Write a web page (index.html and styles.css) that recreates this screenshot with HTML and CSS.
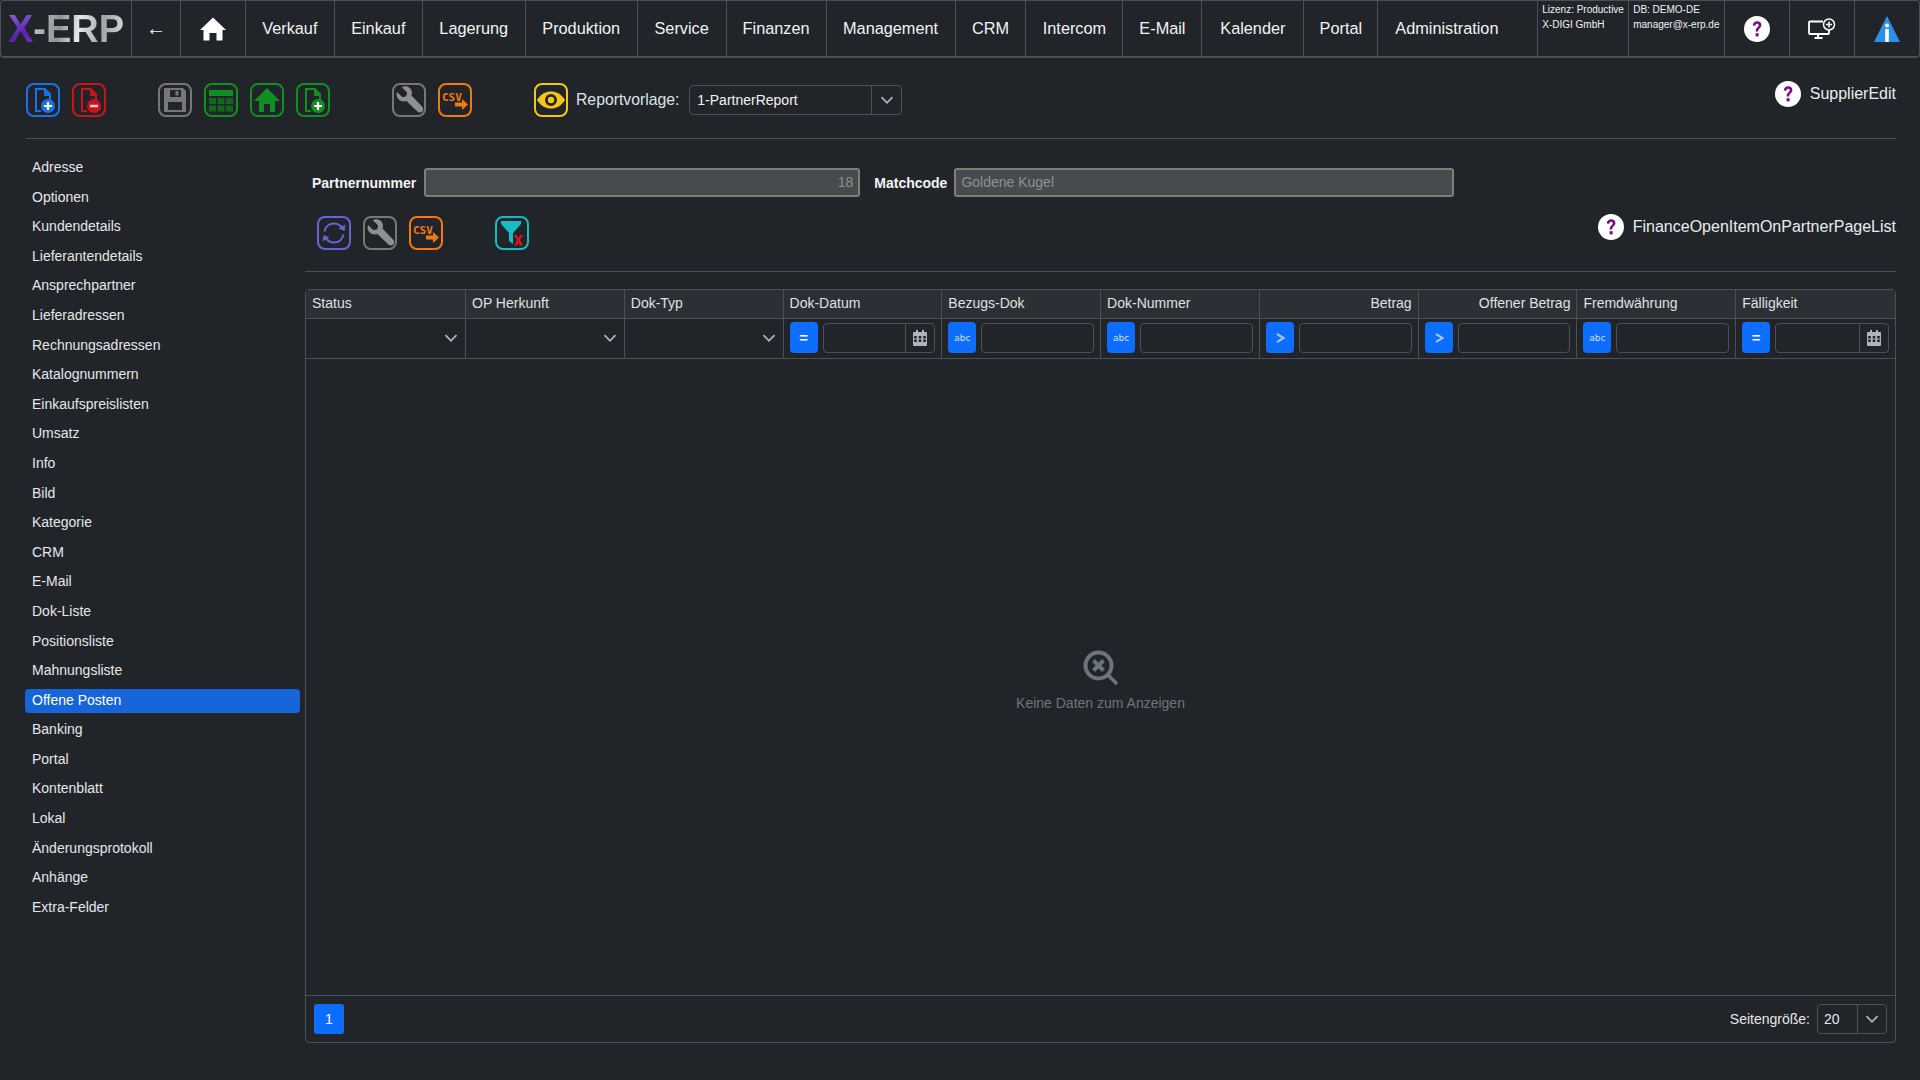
FILE: index.html
```html
<!DOCTYPE html>
<html lang="de">
<head>
    <meta charset="UTF-8">
    <title>X-ERP SupplierEdit</title>
    <link rel="stylesheet" href="styles.css">
</head>
<body>
    <svg class="icon-defs" width="0" height="0">
        <symbol id="i-help" viewBox="0 0 26 26">
            <circle cx="13" cy="13" r="13" fill="#fff"/>
            <path d="M8.800 9.600c0-2.700 1.900-4.300 4.400-4.300s4.200 1.500 4.200 3.800c0 3.100-3.200 3.300-3.200 6.300h-2.500c0-3.800 3-4 3-6.100 0-1-.6-1.600-1.600-1.600-1.100 0-1.700.8-1.800 2.100z" fill="#7a0a80"/>
            <rect x="11.600" y="17.200" width="3" height="3.200" fill="#7a0a80"/>
        </symbol>
        <symbol id="i-chevron" viewBox="0 0 16 16">
            <path d="M2.500 5.200 8 10.800l5.500-5.600" fill="none" stroke="#adb5bd" stroke-width="1.800"/>
        </symbol>
        <symbol id="i-calendar" viewBox="0 0 14 16">
            <path d="M3 0h2v2h4V0h2v2h2a1 1 0 0 1 1 1v12a1 1 0 0 1-1 1H1a1 1 0 0 1-1-1V3a1 1 0 0 1 1-1h2zM1.200 6v2.400h2.600V6zm4.500 0v2.400h2.600V6zm4.500 0v2.400h2.600V6zM1.200 9.600V12h2.600V9.600zm4.500 0V12h2.600V9.600zm4.500 0V12h2.600V9.600z" fill="#adb5bd"/>
        </symbol>
        <symbol id="i-gt" viewBox="0 0 14 14">
            <path d="M4 3 10.500 7 4 11" fill="none" stroke="#fff" stroke-width="1.800"/>
            <path d="M4 3 10.500 7 4 11" fill="none" stroke="#0d6efd" stroke-width="0.600"/>
        </symbol>
        <symbol id="i-wrench" viewBox="0 0 30 30">
            <path d="M3 7 8.500 12.200l3.700-.9.900-3.800L7.800 2.200C12-.2 18 2.500 18 8c0 1-.2 1.800-.5 2.600L28 21.500c1.800 1.800 1.400 3.800.3 5-1.200 1.200-3.300 1.600-5 0L12.500 16c-.9.300-1.800.5-2.700.5C4.500 16.400 1.400 12 3 7z" fill="#8f8f8f"/>
        </symbol>
        <symbol id="i-csv-arrow" viewBox="0 0 30 30">
            <path d="M15 17.500h7V14l6 5.500-6 5.500v-3.500h-7z" fill="#ee7a14"/>
        </symbol>
    </svg>

    <nav class="topnav">
        <a class="nav-logo"><span class="logo-x">X</span><span class="logo-rest">-ERP</span></a>
        <a class="nav-cell nav-back">←</a>
        <a class="nav-cell nav-home">
            <svg width="26" height="26" viewBox="0 0 26 26"><path d="M13 1.500 26 14h-3.500v10.500h-6V17h-7v7.500h-6V14H0z" fill="#fff"/></svg>
        </a>
        <a class="nav-cell w-verkauf">Verkauf</a>
        <a class="nav-cell w-einkauf">Einkauf</a>
        <a class="nav-cell w-lagerung">Lagerung</a>
        <a class="nav-cell w-produktion">Produktion</a>
        <a class="nav-cell w-service">Service</a>
        <a class="nav-cell w-finanzen">Finanzen</a>
        <a class="nav-cell w-management">Management</a>
        <a class="nav-cell w-crm">CRM</a>
        <a class="nav-cell w-intercom">Intercom</a>
        <a class="nav-cell w-email">E-Mail</a>
        <a class="nav-cell w-kalender">Kalender</a>
        <a class="nav-cell w-portal">Portal</a>
        <a class="nav-cell w-admin">Administration</a>
        <div class="nav-info w-lizenz">Lizenz: Productive<br>X-DIGI GmbH</div>
        <div class="nav-info w-db">DB: DEMO-DE<br>manager@x-erp.de</div>
        <a class="nav-cell nav-icon"><svg width="26" height="26"><use href="#i-help"/></svg></a>
        <a class="nav-cell nav-icon">
            <svg width="28" height="22" viewBox="0 0 28 22">
                <path d="M15 3.500H2a1 1 0 0 0-1 1V15a1 1 0 0 0 1 1h18a1 1 0 0 0 1-1v-3" fill="none" stroke="#fff" stroke-width="1.800"/>
                <path d="M10 16v3M6.500 20h8" stroke="#fff" stroke-width="2" fill="none"/>
                <circle cx="21" cy="6.500" r="5.500" fill="none" stroke="#fff" stroke-width="1.500"/>
                <path d="M21 3.500v6M18 6.500h6" stroke="#fff" stroke-width="1.500"/>
            </svg>
        </a>
        <a class="nav-cell nav-icon">
            <svg width="26" height="26" viewBox="0 0 26 26">
                <path d="M13 0 26 26H0z" fill="#2f8fe8"/>
                <circle cx="13" cy="9.500" r="2" fill="#fff"/>
                <rect x="11.200" y="13" width="3.600" height="13" fill="#fff"/>
            </svg>
        </a>
    </nav>

    <div class="toolbar">
        <div class="tool-group gap-after-1">
            <span class="tool-btn c-blue">
                <svg width="30" height="30" viewBox="0 0 30 30">
                    <path d="M7 3h10l6 6v6h-2v-4h-5V5H9v20h4v2H7z" fill="#1a72e8"/>
                    <path d="M18 4l4.500 4.500H18z" fill="#1a72e8"/>
                    <circle cx="20" cy="21" r="7" fill="#1a72e8"/>
                    <path d="M20 17v8M16 21h8" stroke="#fff" stroke-width="2.200"/>
                </svg>
            </span>
            <span class="tool-btn c-red">
                <svg width="30" height="30" viewBox="0 0 30 30">
                    <path d="M7 3h10l6 6v6h-2v-4h-5V5H9v20h4v2H7z" fill="#c9141c"/>
                    <path d="M18 4l4.500 4.500H18z" fill="#c9141c"/>
                    <circle cx="20" cy="21" r="7" fill="#c9141c"/>
                    <path d="M16 21h8" stroke="#f4d0d0" stroke-width="2.500"/>
                </svg>
            </span>
        </div>
        <div class="tool-group gap-after-2">
            <span class="tool-btn c-gray">
                <svg width="30" height="30" viewBox="0 0 30 30">
                    <path d="M4 3h19l3 3v21H4zM10 5v7h11V5zM8 17v8h14v-8z" fill="#777" fill-rule="evenodd"/>
                    <rect x="15.500" y="6" width="3" height="4.500" fill="#777"/>
                </svg>
            </span>
            <span class="tool-btn c-green">
                <svg width="30" height="30" viewBox="0 0 30 30">
                    <rect x="3" y="5" width="24" height="6" fill="#119022"/>
                    <g fill="#0d6a1a">
                        <rect x="3" y="13" width="7" height="6"/><rect x="11.500" y="13" width="7" height="6"/><rect x="20" y="13" width="7" height="6"/>
                        <rect x="3" y="20.500" width="7" height="6"/><rect x="11.500" y="20.500" width="7" height="6"/><rect x="20" y="20.500" width="7" height="6"/>
                    </g>
                </svg>
            </span>
            <span class="tool-btn c-green">
                <svg width="30" height="30" viewBox="0 0 30 30"><path d="M15 3 28 16h-5v11h-5v-8h-6v8H7V16H2z" fill="#119022"/></svg>
            </span>
            <span class="tool-btn c-green">
                <svg width="30" height="30" viewBox="0 0 30 30">
                    <path d="M7 3h10l6 6v6h-2v-4h-5V5H9v20h4v2H7z" fill="#119022"/>
                    <path d="M18 4l4.500 4.500H18z" fill="#119022"/>
                    <circle cx="20" cy="21" r="7" fill="#119022"/>
                    <path d="M20 17v8M16 21h8" stroke="#fff" stroke-width="2.200"/>
                </svg>
            </span>
        </div>
        <div class="tool-group gap-after-3">
            <span class="tool-btn c-gray"><svg width="30" height="30"><use href="#i-wrench"/></svg></span>
            <span class="tool-btn c-orange">
                <svg width="30" height="30" viewBox="0 0 30 30">
                    <text x="2" y="16" class="csv-label">CSV</text>
                    <use href="#i-csv-arrow"/>
                </svg>
            </span>
        </div>
        <span class="tool-btn c-yellow">
            <svg width="30" height="30" viewBox="0 0 30 30">
                <path d="M1 15C5 8.500 10 6.500 15 6.500S25 8.500 29 15c-4 6.500-9 8.500-14 8.500S5 21.500 1 15zm14-6a6 6 0 1 0 0 12 6 6 0 0 0 0-12z" fill="#f5c518" fill-rule="evenodd"/>
                <circle cx="15" cy="15" r="3.200" fill="#f5c518"/>
            </svg>
        </span>
        <label class="report-label">Reportvorlage:</label>
        <div class="report-select">
            <span class="report-value">1-PartnerReport</span>
            <span class="report-arrow"><svg width="16" height="16"><use href="#i-chevron"/></svg></span>
        </div>
        <div class="help-link">
            <svg width="26" height="26"><use href="#i-help"/></svg>
            <span>SupplierEdit</span>
        </div>
    </div>

    <div class="main">
        <ul class="sidemenu">
            <li>Adresse</li>
            <li>Optionen</li>
            <li>Kundendetails</li>
            <li>Lieferantendetails</li>
            <li>Ansprechpartner</li>
            <li>Lieferadressen</li>
            <li>Rechnungsadressen</li>
            <li>Katalognummern</li>
            <li>Einkaufspreislisten</li>
            <li>Umsatz</li>
            <li>Info</li>
            <li>Bild</li>
            <li>Kategorie</li>
            <li>CRM</li>
            <li>E-Mail</li>
            <li>Dok-Liste</li>
            <li>Positionsliste</li>
            <li>Mahnungsliste</li>
            <li class="active">Offene Posten</li>
            <li>Banking</li>
            <li>Portal</li>
            <li>Kontenblatt</li>
            <li>Lokal</li>
            <li>Änderungsprotokoll</li>
            <li>Anhänge</li>
            <li>Extra-Felder</li>
        </ul>

        <div class="content">
            <div class="form-row">
                <label class="form-label">Partnernummer</label>
                <div class="form-input input-number">18</div>
                <label class="form-label label-match">Matchcode</label>
                <div class="form-input input-match">Goldene Kugel</div>
            </div>

            <div class="grid-toolbar">
                <div class="tool-group gap-after-4">
                    <span class="tool-btn c-indigo">
                        <svg width="30" height="30" viewBox="0 0 30 30">
                            <path d="M5.500 13.500C6.500 8.500 10.500 5.500 15 5.500c3.500 0 6.500 1.800 8.200 4.500" fill="none" stroke="#6665d2" stroke-width="2"/>
                            <path d="M26.500 6.500 25.500 13l-6-2.500z" fill="#6665d2"/>
                            <path d="M24.500 16.500c-1 5-5 8-9.500 8-3.500 0-6.500-1.800-8.200-4.500" fill="none" stroke="#6665d2" stroke-width="2"/>
                            <path d="M3.500 23.500 4.500 17l6 2.500z" fill="#6665d2"/>
                        </svg>
                    </span>
                    <span class="tool-btn c-gray"><svg width="30" height="30"><use href="#i-wrench"/></svg></span>
                    <span class="tool-btn c-orange">
                        <svg width="30" height="30" viewBox="0 0 30 30">
                            <text x="2" y="16" class="csv-label">CSV</text>
                            <use href="#i-csv-arrow"/>
                        </svg>
                    </span>
                </div>
                <span class="tool-btn c-teal">
                    <svg width="30" height="30" viewBox="0 0 30 30">
                        <path d="M4 3h20v3l-8 9v11l-4-3v-8L4 6z" fill="#16bcc4"/>
                        <path d="M16.500 17h3.200l1.800 3.200 1.800-3.200H26l-3 5 3 5.500h-3.200l-1.300-2.800-1.300 2.800h-3.200l3-5.500z" fill="#d8161e"/>
                    </svg>
                </span>
                <div class="help-link">
                    <svg width="26" height="26"><use href="#i-help"/></svg>
                    <span>FinanceOpenItemOnPartnerPageList</span>
                </div>
            </div>

            <div class="grid-card">
                <div class="grid-row grid-head">
                    <div class="cell">Status</div>
                    <div class="cell">OP Herkunft</div>
                    <div class="cell">Dok-Typ</div>
                    <div class="cell">Dok-Datum</div>
                    <div class="cell">Bezugs-Dok</div>
                    <div class="cell">Dok-Nummer</div>
                    <div class="cell right">Betrag</div>
                    <div class="cell right">Offener Betrag</div>
                    <div class="cell">Fremdwährung</div>
                    <div class="cell">Fälligkeit</div>
                </div>
                <div class="grid-row grid-filter">
                    <div class="cell select-cell"><svg width="16" height="16"><use href="#i-chevron"/></svg></div>
                    <div class="cell select-cell"><svg width="16" height="16"><use href="#i-chevron"/></svg></div>
                    <div class="cell select-cell"><svg width="16" height="16"><use href="#i-chevron"/></svg></div>
                    <div class="cell">
                        <span class="op-btn op-eq">=</span>
                        <span class="filter-input"><i></i><b><svg width="14" height="16"><use href="#i-calendar"/></svg></b></span>
                    </div>
                    <div class="cell">
                        <span class="op-btn op-abc">abc</span>
                        <span class="filter-input"><i></i></span>
                    </div>
                    <div class="cell">
                        <span class="op-btn op-abc">abc</span>
                        <span class="filter-input"><i></i></span>
                    </div>
                    <div class="cell">
                        <span class="op-btn"><svg width="14" height="14"><use href="#i-gt"/></svg></span>
                        <span class="filter-input"><i></i></span>
                    </div>
                    <div class="cell">
                        <span class="op-btn"><svg width="14" height="14"><use href="#i-gt"/></svg></span>
                        <span class="filter-input"><i></i></span>
                    </div>
                    <div class="cell">
                        <span class="op-btn op-abc">abc</span>
                        <span class="filter-input"><i></i></span>
                    </div>
                    <div class="cell">
                        <span class="op-btn op-eq">=</span>
                        <span class="filter-input"><i></i><b><svg width="14" height="16"><use href="#i-calendar"/></svg></b></span>
                    </div>
                </div>

                <div class="grid-empty">
                    <svg width="36" height="36" viewBox="0 0 36 36">
                        <circle cx="15.500" cy="15.500" r="13" fill="none" stroke="#6c757d" stroke-width="4"/>
                        <path d="M10.500 10.500l10 10M20.500 10.500l-10 10" stroke="#6c757d" stroke-width="4"/>
                        <path d="M25 25l9 9" stroke="#6c757d" stroke-width="3.500"/>
                    </svg>
                    <span>Keine Daten zum Anzeigen</span>
                </div>

                <div class="grid-pager">
                    <span class="page-btn">1</span>
                    <div class="page-size">
                        <span>Seitengröße:</span>
                        <div class="page-select">
                            <span class="page-value">20</span>
                            <span class="page-arrow"><svg width="16" height="16"><use href="#i-chevron"/></svg></span>
                        </div>
                    </div>
                </div>
            </div>
        </div>
    </div>
</body>
</html>
```

FILE: styles.css
```css
* {
    margin: 0;
    padding: 0;
    box-sizing: border-box;
}

body {
    background: #212529;
    color: #dee2e6;
    font-family: "Liberation Sans", Arial, sans-serif;
    font-size: 14px;
    height: 1080px;
    overflow: hidden;
}

.icon-defs {
    position: absolute;
}

.csv-label {
    font-family: "DejaVu Sans Mono", monospace;
    font-size: 11px;
    font-weight: bold;
    fill: #ee7a14;
}

/* top navigation */
.topnav {
    display: flex;
    height: 58px;
    border: 1px solid #495057;
    border-bottom-width: 2px;
    border-radius: 4px;
    color: #f1f3f5;
    font-size: 16.3px;
}

.nav-logo {
    display: flex;
    align-items: center;
    width: 131px;
    padding: 2px 0 0 7px;
    border-right: 1px solid #495057;
    font-size: 38px;
    font-weight: bold;
}

.logo-x {
    background: linear-gradient(160deg, #9a6fe0, #5a22a8 60%, #7a45c8);
    -webkit-background-clip: text;
    background-clip: text;
    color: transparent;
}

.logo-rest {
    background: linear-gradient(100deg, #c8ccd0, #8d9398 30%, #e6e8ea 50%, #a0a5aa 75%, #dfe2e4);
    -webkit-background-clip: text;
    background-clip: text;
    color: transparent;
}

.nav-cell {
    display: flex;
    align-items: center;
    justify-content: center;
    border-right: 1px solid #495057;
}

.nav-back { width: 49px; font-size: 20px; }
.nav-home { width: 65px; }
.w-verkauf { width: 89px; }
.w-einkauf { width: 88px; }
.w-lagerung { width: 103px; }
.w-produktion { width: 112px; }
.w-service { width: 89px; }
.w-finanzen { width: 100px; }
.w-management { width: 129px; }
.w-crm { width: 71px; }
.w-intercom { width: 97px; }
.w-email { width: 79px; }
.w-kalender { width: 102px; }
.w-portal { width: 74px; }
.w-admin { width: 160px; justify-content: flex-start; padding-left: 17px; }
.w-lizenz { width: 91px; }
.w-db { width: 96px; }

.nav-info {
    padding: 1px 0 0 4px;
    border-right: 1px solid #495057;
    font-size: 10px;
    line-height: 15px;
    white-space: nowrap;
}

.nav-icon {
    width: 65px;
}

.nav-icon:last-child {
    width: 64px;
    border-right: none;
}

/* toolbars */
.toolbar {
    display: flex;
    align-items: center;
    margin: 25px 24px 0 26px;
    padding-bottom: 22px;
    height: 56px;
    border-bottom: 1px solid #495057;
}

.tool-group {
    display: flex;
    gap: 12px;
}

.gap-after-1 { margin-right: 52px; }
.gap-after-2 { margin-right: 62px; }
.gap-after-3 { margin-right: 62px; }
.gap-after-4 { margin-right: 52px; }

.tool-btn {
    display: flex;
    align-items: center;
    justify-content: center;
    width: 34px;
    height: 34px;
    border: 2px solid;
    border-radius: 8px;
}

.c-blue { border-color: #1a72e8; }
.c-red { border-color: #c9141c; }
.c-gray { border-color: #777; }
.c-green { border-color: #119022; }
.c-orange { border-color: #ee7a14; }
.c-yellow { border-color: #f5c518; }
.c-indigo { border-color: #6665d2; }
.c-teal { border-color: #16bcc4; }

.report-label {
    margin-left: 8px;
    color: #dee2e6;
    font-size: 15.75px;
}

.report-select {
    display: flex;
    width: 213px;
    height: 30px;
    margin-left: 10px;
    border: 1px solid #495057;
    border-radius: 4px;
    align-items: center;
}

.report-value {
    flex-grow: 1;
    padding-left: 7px;
    color: #f1f3f5;
}

.report-arrow {
    display: flex;
    align-items: center;
    justify-content: center;
    width: 30px;
    height: 100%;
    border-left: 1px solid #495057;
}

.help-link {
    display: flex;
    align-items: center;
    gap: 9px;
    margin-left: auto;
    color: #e9ecef;
    font-size: 16px;
}

.toolbar .help-link {
    margin-top: -11px;
}

/* main area */
.main {
    display: flex;
}

.sidemenu {
    list-style: none;
    width: 305px;
    padding: 17px 5px 0 25px;
}

.sidemenu li {
    height: 24px;
    margin-bottom: 5.6px;
    padding-left: 7px;
    border-radius: 4px;
    line-height: 23px;
    color: #e4e7ea;
}

.sidemenu .active {
    background: #1565d8;
    color: #fff;
}

.content {
    width: 1591px;
}

.form-row {
    display: flex;
    align-items: center;
    height: 29px;
    margin-top: 29px;
}

.form-label {
    padding-left: 7px;
    color: #f1f3f5;
    font-weight: bold;
}

.form-input {
    height: 29px;
    border: 2px solid #7d7f76;
    border-radius: 3px;
    background: #484b4e;
    color: #8d9093;
    line-height: 25px;
    padding: 0 5px;
}

.input-number {
    width: 436px;
    margin-left: 8px;
    text-align: right;
}

.label-match {
    margin-left: 7px;
}

.input-match {
    width: 500px;
    margin-left: 7px;
}

.grid-toolbar {
    display: flex;
    align-items: center;
    height: 56px;
    margin-top: 19px;
    padding: 0 0 22px 12px;
    border-bottom: 1px solid #495057;
}

.grid-toolbar .help-link {
    margin-top: -12px;
}

/* data grid */
.grid-card {
    display: flex;
    flex-direction: column;
    height: 754px;
    margin-top: 17px;
    border: 1px solid #495057;
    border-radius: 4px;
}

.grid-row {
    display: grid;
    grid-template-columns: 160px repeat(9, 1fr);
    border-bottom: 1px solid #495057;
}

.grid-head {
    height: 29px;
    background: #2c3034;
    color: #dee2e6;
}

.grid-head .cell {
    padding-bottom: 2px;
}

.grid-filter {
    height: 40px;
}

.grid-filter .cell {
    padding-bottom: 2px;
}

.cell {
    display: flex;
    align-items: center;
    padding: 0 6px;
    border-right: 1px solid #495057;
}

.cell:last-child {
    border-right: none;
}

.right {
    justify-content: flex-end;
}

.select-cell {
    justify-content: flex-end;
    padding-right: 6px;
}

.op-btn {
    display: flex;
    align-items: center;
    justify-content: center;
    flex: 0 0 28px;
    height: 31px;
    border-radius: 4px;
    background: #0d6efd;
    color: #fff;
}

.op-eq {
    font-weight: bold;
    font-size: 15px;
}

.op-abc {
    font-family: "DejaVu Sans", sans-serif;
    font-size: 9px;
    color: #cfe2ff;
}

.filter-input {
    display: flex;
    flex-grow: 1;
    height: 30px;
    margin-left: 5px;
    border: 1px solid #495057;
    border-radius: 4px;
}

.filter-input i {
    flex-grow: 1;
}

.filter-input b {
    display: flex;
    align-items: center;
    justify-content: center;
    width: 29px;
    border-left: 1px solid #495057;
}

.grid-empty {
    display: flex;
    flex-direction: column;
    align-items: center;
    justify-content: center;
    flex-grow: 1;
    gap: 9px;
    padding-top: 6px;
    color: #6c757d;
}

.grid-pager {
    display: flex;
    align-items: center;
    justify-content: space-between;
    height: 47px;
    padding: 0 8px;
    border-top: 1px solid #495057;
}

.page-btn {
    display: flex;
    align-items: center;
    justify-content: center;
    width: 30px;
    height: 30px;
    border-radius: 3px;
    background: #0d6efd;
    color: #fff;
}

.page-size {
    display: flex;
    align-items: center;
    gap: 7px;
    color: #e4e7ea;
}

.page-select {
    display: flex;
    align-items: center;
    width: 70px;
    height: 30px;
    border: 1px solid #495057;
    border-radius: 4px;
}

.page-value {
    flex-grow: 1;
    padding-left: 6px;
}

.page-arrow {
    display: flex;
    align-items: center;
    justify-content: center;
    width: 29px;
    height: 100%;
    border-left: 1px solid #495057;
}
```
